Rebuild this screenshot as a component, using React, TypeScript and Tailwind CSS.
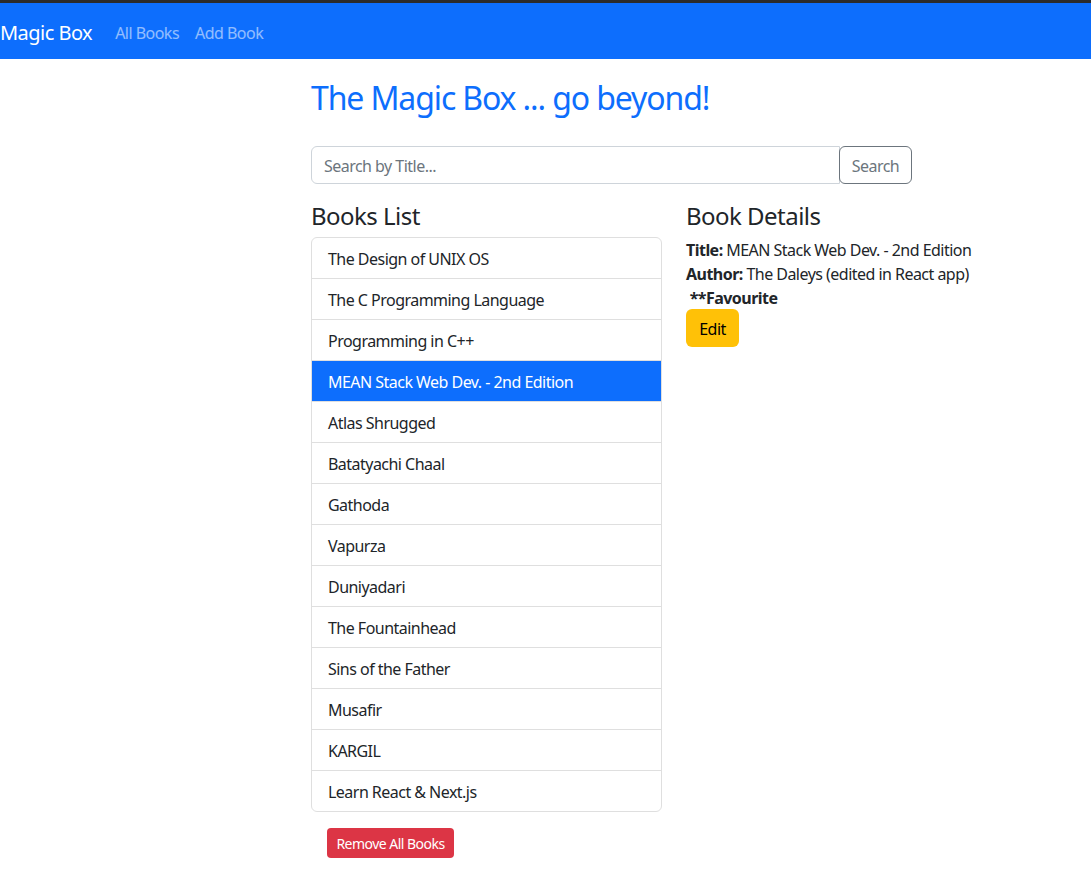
import React from "react";

const books = [
  "The Design of UNIX OS",
  "The C Programming Language",
  "Programming in C++",
  "MEAN Stack Web Dev. - 2nd Edition",
  "Atlas Shrugged",
  "Batatyachi Chaal",
  "Gathoda",
  "Vapurza",
  "Duniyadari",
  "The Fountainhead",
  "Sins of the Father",
  "Musafir",
  "KARGIL",
  "Learn React & Next.js",
];

export default function App() {
  const font = { fontFamily: '"Noto Sans", "Open Sans", sans-serif' };
  return (
    <div className="min-h-[892px] bg-white tracking-[-0.033em] text-[#212529]" style={font}>
      <div className="h-[3px] bg-[#2b2b2b]" />
      <nav className="flex h-[56px] items-center bg-[#0d6efd] pt-[3px]">
        <span className="text-[20px] leading-[30px] text-white">Magic Box</span>
        <div className="ml-[23px] flex gap-[16px] text-[16px] text-white/55">
          <span>All Books</span>
          <span>Add Book</span>
        </div>
      </nav>
      <div className="ml-[311px] w-[750px]">
        <h2 className="mt-[20px] text-[32px] leading-[38px] tracking-[-0.035em] text-[#0d6efd]">
          The Magic Box ... go beyond!
        </h2>
        <div className="mt-[29px] flex h-[38px] w-[601px]">
          <div className="flex flex-1 items-center rounded-l-[6px] border border-[#ced4da] px-[12px] pt-[2px] text-[16px] text-[#6c757d]">
            Search by Title...
          </div>
          <button className="-ml-px w-[73px] rounded-[6px] border border-[#6c757d] pt-[2px] text-[16px] text-[#6c757d]">
            Search
          </button>
        </div>
        <div className="mt-[16px] flex gap-[24px]">
          <div className="w-[351px]">
            <h4 className="mb-[8px] pt-[2px] text-[24px] leading-[27px]">Books List</h4>
            <ul className="overflow-hidden rounded-[6px] border border-[#dfdfdf]">
              {books.map((b, i) => (
                <li
                  key={b}
                  className={
                    (i > 0 ? "border-t border-[#dfdfdf] " : "") +
                    (i === 3 ? "bg-[#0d6efd] text-white " : "") +
                    "px-[16px] pb-[7px] pt-[9px] text-[16px] leading-[24px]"
                  }
                >
                  {b}
                </li>
              ))}
            </ul>
            <button className="ml-[16px] mt-[16px] h-[30px] w-[127px] rounded-[4px] bg-[#dc3545] pt-[1px] text-[14px] leading-[21px] text-white">
              Remove All Books
            </button>
          </div>
          <div className="w-[351px]">
            <h4 className="mb-[8px] pt-[2px] text-[24px] leading-[27px]">Book Details</h4>
            <div className="pt-[1px] text-[16px] leading-[24px]">
              <div>
                <strong className="font-bold">Title:</strong> MEAN Stack Web Dev. - 2nd Edition
              </div>
              <div>
                <strong className="font-bold">Author:</strong> The Daleys (edited in React app)
              </div>
              <div>
                <strong className="font-bold">&nbsp;**Favourite</strong>
              </div>
            </div>
            <button className="-mt-px h-[38px] w-[53px] rounded-[6px] bg-[#ffc107] pt-[1px] text-[16px] text-black">
              Edit
            </button>
          </div>
        </div>
      </div>
    </div>
  );
}
